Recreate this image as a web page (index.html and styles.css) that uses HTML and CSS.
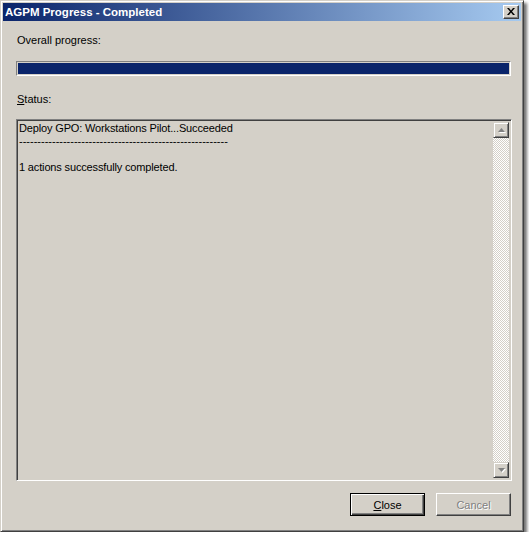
FILE: index.html
```html
<!DOCTYPE html>
<html lang="en">
  <head>
    <title>AGPM Progress - Completed</title>
    <meta charset="utf-8">
    <meta name="viewport" content="width=device-width, initial-scale=1">
    <link rel="stylesheet" href="styles.css">
  </head>
  <body>
    <div class="window">

      <div class="titlebar">
        <span class="title">AGPM Progress - Completed</span>
        <button class="close-box" aria-label="Close">
          <svg width="8" height="7" viewBox="0 0 8 7">
            <path d="M0 0h2l2 2.5 2-2.5h2l-3 3.5 3 3.5h-2l-2-2.5-2 2.5h-2l3-3.5z" fill="#000"/>
          </svg>
        </button>
      </div>

      <div class="content">
        <div class="label overall">Overall progress:</div>
        <div class="progress"><div class="progress-fill"></div></div>

        <div class="label status"><u>S</u>tatus:</div>

        <div class="log">
          <div class="log-text">
            <div>Deploy GPO: Workstations Pilot...Succeeded</div>
            <div class="dashes">---------------------------------------------------------</div>
            <div>&nbsp;</div>
            <div>1 actions successfully completed.</div>
          </div>
          <div class="scrollbar">
            <div class="arrow">
              <svg width="7" height="4" viewBox="0 0 7 4"><path d="M3.5 0L7 4H0z" fill="#808080"/></svg>
            </div>
            <div class="track"></div>
            <div class="arrow">
              <svg width="7" height="4" viewBox="0 0 7 4"><path d="M0 0h7L3.5 4z" fill="#808080"/></svg>
            </div>
          </div>
        </div>

        <div class="buttons">
          <button class="btn default"><u>C</u>lose</button>
          <button class="btn" disabled>Cancel</button>
        </div>
      </div>

    </div>
  </body>
</html>
```

FILE: styles.css
```css
body {
  background: #fff;
  margin: 0;
  font-family: "Liberation Sans", Arial, sans-serif;
  font-size: 11px;
  color: #000;
}

.window {
  background: #d4d0c8;
  border: 1px solid;
  border-color: #d4d0c8 #404040 #404040 #d4d0c8;
  box-shadow: inset 1px 1px #fff, inset -1px -1px #808080, 3px 3px 3px rgba(0, 0, 0, 0.55);
  box-sizing: border-box;
  display: flex;
  flex-direction: column;
  height: 532px;
  padding: 2px;
  width: 524px;
}

.titlebar {
  align-items: center;
  background: linear-gradient(to right, #0a246a, #a6caf0);
  display: flex;
  height: 18px;
  justify-content: space-between;
  padding: 0 2px;
}

.title {
  color: #fff;
  font-weight: bold;
  font-size: 11.5px;
}

.close-box {
  align-items: center;
  background: #d4d0c8;
  border: 1px solid;
  border-color: #fff #404040 #404040 #fff;
  box-shadow: inset -1px -1px #808080;
  box-sizing: border-box;
  display: flex;
  height: 14px;
  justify-content: center;
  padding: 0 0 1px 0;
  width: 16px;
}

.content {
  display: flex;
  flex: 1;
  flex-direction: column;
  padding: 0 10px 0 13px;
}

.label {
  height: 14px;
  line-height: 14px;
}

.overall {
  margin: 12px 0 14px 1px;
}

.status {
  margin: 16px 0 13px 1px;
}

.progress {
  background: #d4d0c8;
  border: 1px solid;
  border-color: #808080 #fff #fff #808080;
  box-sizing: border-box;
  height: 15px;
  padding: 1px;
}

.progress-fill {
  background: #0a246a;
  height: 100%;
}

.log {
  border: 1px solid;
  border-color: #808080 #fff #fff #808080;
  box-shadow: inset 1px 1px #404040, inset -1px -1px #d4d0c8;
  box-sizing: border-box;
  display: flex;
  height: 362px;
  margin-right: -1px;
  padding: 2px;
}

.log-text {
  flex: 1;
  letter-spacing: -0.15px;
  line-height: 13px;
}

.dashes {
  letter-spacing: 0;
  white-space: nowrap;
}

.scrollbar {
  display: flex;
  flex-direction: column;
  width: 16px;
}

.arrow {
  align-items: center;
  background: #d4d0c8;
  border: 1px solid;
  border-color: #d4d0c8 #404040 #404040 #d4d0c8;
  box-shadow: inset 1px 1px #fff, inset -1px -1px #808080;
  box-sizing: border-box;
  display: flex;
  height: 16px;
  justify-content: center;
}

.arrow svg {
  filter: drop-shadow(1px 1px 0 #fff);
}

.track {
  background: repeating-conic-gradient(#d4d0c8 0 25%, #fff 0 50%) 0 0 / 2px 2px;
  flex: 1;
}

.buttons {
  display: flex;
  gap: 11px;
  justify-content: flex-end;
  margin-top: 12px;
}

.btn {
  background: #d4d0c8;
  border: 1px solid;
  border-color: #fff #404040 #404040 #fff;
  box-shadow: inset -1px -1px #808080;
  box-sizing: border-box;
  font-family: "Liberation Sans", Arial, sans-serif;
  font-size: 11px;
  height: 23px;
  padding: 0;
  width: 75px;
}

.btn.default {
  border: 1px solid #000;
  box-shadow: inset 1px 1px #fff, inset -1px -1px #404040, inset -2px -2px #808080;
}

.btn:disabled {
  color: #808080;
  text-shadow: 1px 1px #fff;
}
```
